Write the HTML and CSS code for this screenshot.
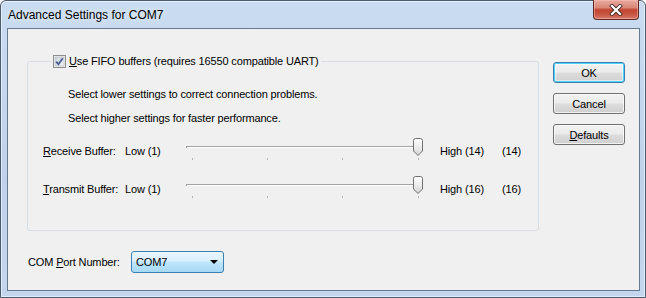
FILE: index.html
```html
<!DOCTYPE html>
<html lang="en">
<head>
    <meta charset="UTF-8">
    <title>Advanced Settings for COM7</title>
    <link rel="stylesheet" href="styles.css">
</head>
<body>
    <div class="window">
        <div class="titlebar">
            <span class="title">Advanced Settings for COM7</span>
            <div class="close-btn">
                <svg width="14" height="12" viewBox="0 0 14 12">
                    <path d="M3 2 L11 10 M11 2 L3 10" stroke="#4a2a28" stroke-width="4" stroke-linecap="square"/>
                    <path d="M3 2 L11 10 M11 2 L3 10" stroke="#fff" stroke-width="2.2" stroke-linecap="square"/>
                </svg>
            </div>
        </div>
        <div class="client">
            <div class="main">
                <fieldset class="group">
                    <legend>
                        <label class="check">
                            <svg class="checkbox" width="13" height="13" viewBox="0 0 13 13">
                                <defs>
                                    <linearGradient id="cbg" x1="0" y1="0" x2="1" y2="1">
                                        <stop offset="0" stop-color="#cbd3dd"/>
                                        <stop offset="1" stop-color="#f4f6f9"/>
                                    </linearGradient>
                                </defs>
                                <rect x="0.5" y="0.5" width="12" height="12" fill="#f4f4f4" stroke="#8e8f8f"/>
                                <rect x="2" y="2" width="9" height="9" fill="url(#cbg)" stroke="#aeb3b9" stroke-width="0.6"/>
                                <path d="M3.2 6.6 L5.4 9.2 L9.8 3.2" fill="none" stroke="#4c5f8f" stroke-width="1.8"/>
                            </svg>
                            <span><u>U</u>se FIFO buffers (requires 16550 compatible UART)</span>
                        </label>
                    </legend>
                    <p class="hint first">Select lower settings to correct connection problems.</p>
                    <p class="hint">Select higher settings for faster performance.</p>

                    <div class="slider-row first-row">
                        <span><u>R</u>eceive Buffer:</span>
                        <span>Low (1)</span>
                        <svg class="slider" width="254" height="26" viewBox="0 0 254 26">
                            <rect x="0" y="8" width="237" height="1" fill="#a3a3a3"/>
                            <rect x="1" y="9" width="236" height="1" fill="#ffffff"/>
                            <rect x="0" y="8" width="1" height="2" fill="#a3a3a3"/>
                            <rect x="6" y="20" width="1" height="2" fill="#b4b4b4"/>
                            <rect x="81" y="20" width="1" height="2" fill="#b4b4b4"/>
                            <rect x="156" y="20" width="1" height="2" fill="#b4b4b4"/>
                            <rect x="232" y="20" width="1" height="2" fill="#b4b4b4"/>
                            <defs>
                                <linearGradient id="thumb" x1="0" y1="0" x2="0" y2="1">
                                    <stop offset="0" stop-color="#ffffff"/>
                                    <stop offset="0.5" stop-color="#ececec"/>
                                    <stop offset="1" stop-color="#d2d2d2"/>
                                </linearGradient>
                            </defs>
                            <path d="M227.5 2.5 Q227.5 0.5 229.5 0.5 H234.5 Q236.5 0.5 236.5 2.5 V13 L232 17.5 L227.5 13 Z" fill="url(#thumb)" stroke="#707070"/>
                        </svg>
                        <span>High (14)</span>
                        <span>(14)</span>
                    </div>

                    <div class="slider-row">
                        <span><u>T</u>ransmit Buffer:</span>
                        <span>Low (1)</span>
                        <svg class="slider" width="254" height="26" viewBox="0 0 254 26">
                            <rect x="0" y="8" width="237" height="1" fill="#a3a3a3"/>
                            <rect x="1" y="9" width="236" height="1" fill="#ffffff"/>
                            <rect x="0" y="8" width="1" height="2" fill="#a3a3a3"/>
                            <rect x="6" y="20" width="1" height="2" fill="#b4b4b4"/>
                            <rect x="81" y="20" width="1" height="2" fill="#b4b4b4"/>
                            <rect x="156" y="20" width="1" height="2" fill="#b4b4b4"/>
                            <rect x="232" y="20" width="1" height="2" fill="#b4b4b4"/>
                            <path d="M227.5 2.5 Q227.5 0.5 229.5 0.5 H234.5 Q236.5 0.5 236.5 2.5 V13 L232 17.5 L227.5 13 Z" fill="url(#thumb)" stroke="#707070"/>
                        </svg>
                        <span>High (16)</span>
                        <span>(16)</span>
                    </div>
                </fieldset>

                <div class="port-row">
                    <span class="port-label">COM <u>P</u>ort Number:</span>
                    <div class="combo">
                        <span>COM7</span>
                        <span class="arrow"></span>
                    </div>
                </div>
            </div>

            <div class="buttons">
                <button class="btn default">OK</button>
                <button class="btn">Cancel</button>
                <button class="btn"><u>D</u>efaults</button>
            </div>
        </div>
    </div>
</body>
</html>
```

FILE: styles.css
```css
body {
    margin: 0;
    padding: 0;
    background-color: #ffffff;
    font-family: 'Liberation Sans', Arial, sans-serif;
    font-size: 11px;
    letter-spacing: -0.15px;
    color: #000;
}
.window {
    box-sizing: border-box;
    width: 646px;
    height: 298px;
    border: 1px solid #4b5b70;
    border-radius: 6px 6px 0 0;
    background: linear-gradient(180deg, #cadcf1 0%, #bed2eb 60%, #c3d6ee 100%);
    box-shadow: inset 0 0 0 1px rgba(255, 255, 255, 0.55);
    padding: 0 5px 6px 6px;
    display: flex;
    flex-direction: column;
}
.titlebar {
    height: 27px;
    display: flex;
    align-items: flex-start;
}
.title {
    font-size: 12px;
    letter-spacing: 0;
    padding: 7px 0 0 1px;
    text-shadow: 0 0 6px rgba(255, 255, 255, 0.9);
}
.close-btn {
    margin-left: auto;
    margin-right: 1px;
    margin-top: -1px;
    width: 46px;
    height: 20px;
    box-sizing: border-box;
    border: 1px solid #5e2b26;
    border-top: none;
    border-radius: 0 0 4px 4px;
    background: linear-gradient(180deg, #e9aa9f 0%, #d98777 40%, #c2452f 52%, #c85642 75%, #d67c6b 100%);
    box-shadow: inset 0 0 0 1px rgba(255, 200, 190, 0.45);
    display: flex;
    align-items: center;
    justify-content: center;
}
.client {
    flex: 1;
    display: flex;
    border: 1px solid #67798f;
    background-color: #f0f0f0;
}
.main {
    padding: 25px 0 0 19px;
}
.group {
    box-sizing: border-box;
    width: 512px;
    margin: 0;
    padding: 0 0 28px 0;
    border: 1px solid #d5dfe5;
    border-radius: 3px;
}
.group legend {
    margin-left: 23px;
    padding: 0 2px;
    line-height: 14px;
}
.check {
    display: flex;
    align-items: center;
    gap: 3px;
}
.checkbox {
    display: block;
}
.hint {
    margin: 10px 0 0 40px;
    line-height: 14px;
}
.hint.first {
    margin-top: 19px;
}
.slider-row {
    display: grid;
    grid-template-columns: 82px 61px 254px 62px auto;
    align-items: center;
    height: 26px;
    margin: 12px 0 0 15px;
}
.slider-row.first-row {
    margin-top: 13px;
}
.slider {
    display: block;
}
.port-row {
    display: flex;
    align-items: center;
    margin: 20px 0 0 1px;
}
.port-label {
    width: 103px;
}
.combo {
    box-sizing: border-box;
    width: 93px;
    height: 22px;
    border: 1px solid #3c7fb1;
    border-radius: 3px;
    background: linear-gradient(180deg, #eaf6fd 0%, #d9f0fc 45%, #bee6fd 50%, #a7d9f5 100%);
    display: flex;
    align-items: center;
    padding: 0 5px 0 4px;
}
.arrow {
    margin-left: auto;
    width: 0;
    height: 0;
    border-left: 4px solid transparent;
    border-right: 4px solid transparent;
    border-top: 4px solid #000;
}
.buttons {
    display: flex;
    flex-direction: column;
    gap: 10px;
    padding-top: 33px;
    margin-left: 14px;
}
.btn {
    box-sizing: border-box;
    width: 72px;
    height: 21px;
    padding: 0;
    font-family: 'Liberation Sans', Arial, sans-serif;
    font-size: 11px;
    letter-spacing: -0.15px;
    color: #000;
    border: 1px solid #707070;
    border-radius: 3px;
    background: linear-gradient(180deg, #f2f2f2 0%, #ebebeb 48%, #dddddd 52%, #cfcfcf 100%);
    box-shadow: inset 0 0 0 1px rgba(255, 255, 255, 0.7);
}
.btn.default {
    border-color: #3c7fb1;
    box-shadow: inset 0 0 0 1px #48d4fe, inset 0 0 0 2px rgba(255, 255, 255, 0.5);
}
```
